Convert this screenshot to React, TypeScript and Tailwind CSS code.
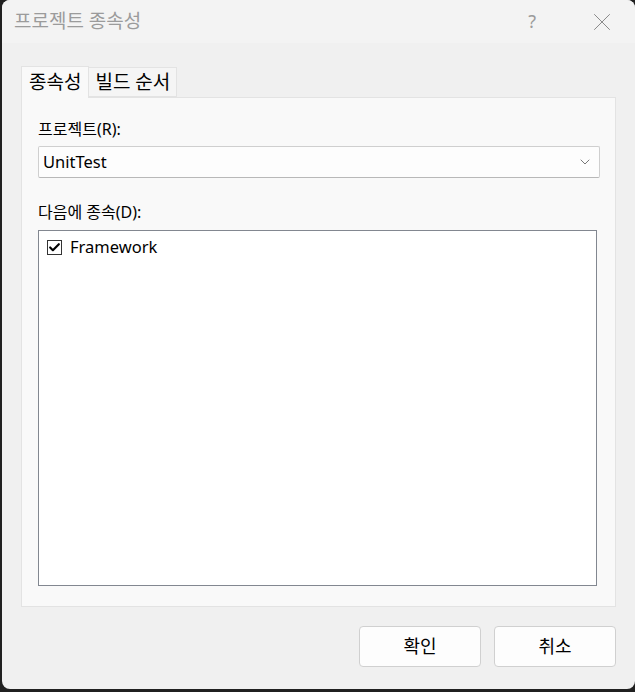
import { Check, ChevronDown, X } from "lucide-react";

const font = "font-['Noto_Sans','Noto_Sans_CJK_KR',sans-serif]";

export default function App() {
  return (
    <div className={`w-[635px] h-[692px] bg-[#202020] pl-[2px] pb-[3px] ${font}`}>
      <div className="h-full rounded-[8px] bg-[#f0f0f0] flex flex-col overflow-hidden">
        <TitleBar />
        <div className="flex-1 flex flex-col px-[19px] pt-[23px]">
          <Tabs />
          <Panel />
          <Buttons />
        </div>
      </div>
    </div>
  );
}

function TitleBar() {
  return (
    <div className="h-[43px] bg-[#f3f3f3] flex items-center pl-[12px] pr-[18px]">
      <span className="text-[19px] text-[#9b9b9b] flex-1">프로젝트 종속성</span>
      <span className="text-[18px] text-[#9b9b9b] mr-[51px]">?</span>
      <X size={30} strokeWidth={0.8} className="text-[#8a8a8a]" />
    </div>
  );
}

function Tabs() {
  return (
    <div className="flex items-end h-[31px]">
      <div className="h-[32px] -mb-px relative z-10 px-[7px] bg-[#f9f9f9] border border-b-0 border-[#e3e3e3] text-[19px] text-black flex items-center">
        종속성
      </div>
      <div className="h-[30px] px-[6px] bg-[#f5f5f5] border border-l-0 border-[#e3e3e3] text-[19px] text-black flex items-center">
        빌드 순서
      </div>
    </div>
  );
}

function Panel() {
  return (
    <div className="h-[510px] bg-[#f9f9f9] border border-[#e3e3e3] pl-[16px] pr-[15px] pt-[20px] flex flex-col">
      <div className="text-[16px] leading-[22px] text-black">프로젝트(R):</div>
      <div className="mt-[6px] h-[32px] bg-[#fdfdfd] border border-[#cfcfcf] border-b-[#b8b8b8] rounded-[2px] flex items-center pl-[4px] pr-[6px]">
        <span className="flex-1 text-[16.5px] text-black">UnitTest</span>
        <ChevronDown size={16} strokeWidth={1.2} className="text-[#555]" />
      </div>
      <div className="mt-[23px] text-[16px] leading-[22px] text-black">다음에 종속(D):</div>
      <div className="mt-[7px] h-[356px] mr-[3px] bg-white border border-[#828790] pt-[6px] pl-[8px]">
        <div className="flex items-center gap-[8px]">
          <div className="w-[15px] h-[15px] border border-[#333] bg-white flex items-center justify-center">
            <Check size={13} strokeWidth={4} className="text-black" />
          </div>
          <span className="text-[16.5px] leading-[20px] text-black">Framework</span>
        </div>
      </div>
    </div>
  );
}

function Buttons() {
  return (
    <div className="flex justify-end gap-[13px] mt-[19px]">
      <button className="w-[122px] h-[41px] bg-[#fdfdfd] border border-[#d0d0d0] rounded-[4px] text-[18px] text-black">
        확인
      </button>
      <button className="w-[122px] h-[41px] bg-[#fdfdfd] border border-[#d0d0d0] rounded-[4px] text-[18px] text-black">
        취소
      </button>
    </div>
  );
}
